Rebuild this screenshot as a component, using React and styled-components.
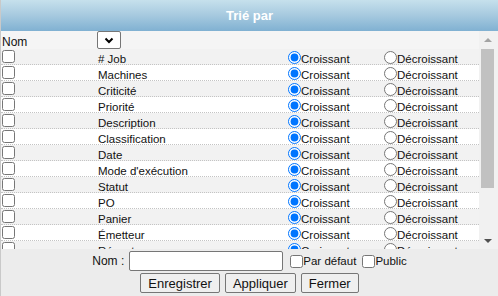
import React from "react";
import styled, { createGlobalStyle } from "styled-components";

const GlobalStyle = createGlobalStyle`
  body {
    margin: 0;
    font-family: "Liberation Sans", Arial, sans-serif;
    font-size: 11.5px;
    color: #111;
  }
`;

const fields = [
  "# Job",
  "Machines",
  "Criticité",
  "Priorité",
  "Description",
  "Classification",
  "Date",
  "Mode d'exécution",
  "Statut",
  "PO",
  "Panier",
  "Émetteur",
  "Récepteur",
  "Date de création",
  "Date de fin",
  "Responsable",
  "Commentaire",
];

const SortDialog = () => {
  return (
    <Dialog>
      <GlobalStyle />
      <Title>Trié par</Title>
      <ScrollArea>
        <List>
          <HeadRow>
            <HeadLabel>Nom</HeadLabel>
            <FakeSelect>
              <svg width="10" height="7" viewBox="0 0 10 7">
                <path d="M1.5 1.5L5 5l3.5-3.5" fill="none" stroke="#000" strokeWidth="2" />
              </svg>
            </FakeSelect>
          </HeadRow>
          {fields.map((name, i) => (
            <Row key={name} alt={i % 2 === 0}>
              <Cell>
                <Check type="checkbox" />
              </Cell>
              <TextCell>{name}</TextCell>
              <TextCell>
                <Radio type="radio" name={"r" + i} defaultChecked />
                Croissant
              </TextCell>
              <TextCell>
                <Radio type="radio" name={"r" + i} />
                Décroissant
              </TextCell>
            </Row>
          ))}
        </List>
        <Scrollbar>
          <ArrowButton>
            <svg width="8" height="4" viewBox="0 0 8 4">
              <path d="M0 4h8L4 0z" fill="#a3a3a3" />
            </svg>
          </ArrowButton>
          <Track>
            <Thumb />
          </Track>
          <ArrowButton>
            <svg width="8" height="4" viewBox="0 0 8 4">
              <path d="M0 0h8L4 4z" fill="#505050" />
            </svg>
          </ArrowButton>
        </Scrollbar>
      </ScrollArea>
      <Footer>
        <NameLine>
          <NameLabel>Nom :</NameLabel>
          <NameInput type="text" />
          <Option>
            <Check type="checkbox" />
            Par défaut
          </Option>
          <Option>
            <Check type="checkbox" />
            Public
          </Option>
        </NameLine>
        <Buttons>
          <Button>Enregistrer</Button>
          <Button>Appliquer</Button>
          <Button>Fermer</Button>
        </Buttons>
      </Footer>
    </Dialog>
  );
};

const Dialog = styled.div`
  width: 497px;
  height: 296px;
  display: flex;
  flex-direction: column;
  background: #ececec;
  border-left: 1px solid #c9c9c9;
  overflow: hidden;
`;

const Title = styled.div`
  height: 31px;
  flex: none;
  display: flex;
  align-items: center;
  justify-content: center;
  background: linear-gradient(to bottom, #c6e0ec 0%, #a6c9df 50%, #80b1d2 100%);
  color: #fff;
  font-weight: bold;
  font-size: 13px;
`;

const ScrollArea = styled.div`
  height: 218px;
  flex: none;
  display: flex;
  background: #f5f5f5;
`;

const List = styled.div`
  flex: 1;
  overflow: hidden;
`;

const Scrollbar = styled.div`
  width: 19px;
  flex: none;
  display: flex;
  flex-direction: column;
  background: #f1f1f1;
`;

const ArrowButton = styled.div`
  height: 17px;
  width: 17px;
  flex: none;
  display: flex;
  align-items: center;
  justify-content: center;
`;

const Track = styled.div`
  flex: 1;
  padding: 1px 4px 0 2px;
`;

const Thumb = styled.div`
  height: 139px;
  background: #c1c1c1;
`;

const HeadRow = styled.div`
  height: 18px;
  display: grid;
  grid-template-columns: 96px 1fr;
  align-items: center;
`;

const HeadLabel = styled.span`
  padding-left: 1px;
  font-size: 12px;
  padding-top: 4px;
`;

const FakeSelect = styled.div`
  width: 22px;
  height: 16px;
  display: flex;
  align-items: center;
  justify-content: center;
  background: #fff;
  border: 1px solid #767676;
  border-radius: 2px;
`;

const Row = styled.div`
  height: 15px;
  display: grid;
  grid-template-columns: 97px 190px 96px 1fr;
  background: ${(p) => (p.alt ? "#f2f2f2" : "#ffffff")};
  border-bottom: 1px dotted #c4c4c4;
`;

const Cell = styled.div`
  display: flex;
  align-items: flex-start;
`;

const TextCell = styled.div`
  display: flex;
  align-items: flex-start;
  white-space: nowrap;
  padding-top: 4px;
  line-height: 13px;
`;

const Check = styled.input`
  width: 13px;
  height: 13px;
  margin: 1px 0 0 1px;
`;

const Radio = styled.input`
  width: 13px;
  height: 13px;
  margin: -2px 0 0 0;
`;

const Footer = styled.div`
  flex: 1;
  display: flex;
  flex-direction: column;
  align-items: center;
  padding-top: 2px;
  gap: 2px;
`;

const NameLine = styled.div`
  display: flex;
  align-items: center;
`;

const NameLabel = styled.span`
  margin-right: 5px;
  font-size: 12px;
`;

const NameInput = styled.input`
  width: 154px;
  height: 20px;
  box-sizing: border-box;
  border: 1px solid #767676;
  border-radius: 2px;
  margin: 0 7px 0 0;
  padding: 0 2px;
`;

const Option = styled.label`
  display: flex;
  align-items: center;
  margin-right: 6px;
  &:last-child {
    margin-right: 0;
  }
  & > input {
    margin: 0;
  }
`;

const Buttons = styled.div`
  display: flex;
  gap: 5px;
`;

const Button = styled.button`
  height: 20px;
  padding: 0 7px;
  font-family: "Liberation Sans", Arial, sans-serif;
  font-size: 13px;
  color: #111;
  background: #efefef;
  border: 1px solid #767676;
  border-radius: 2px;
`;

export default SortDialog;
